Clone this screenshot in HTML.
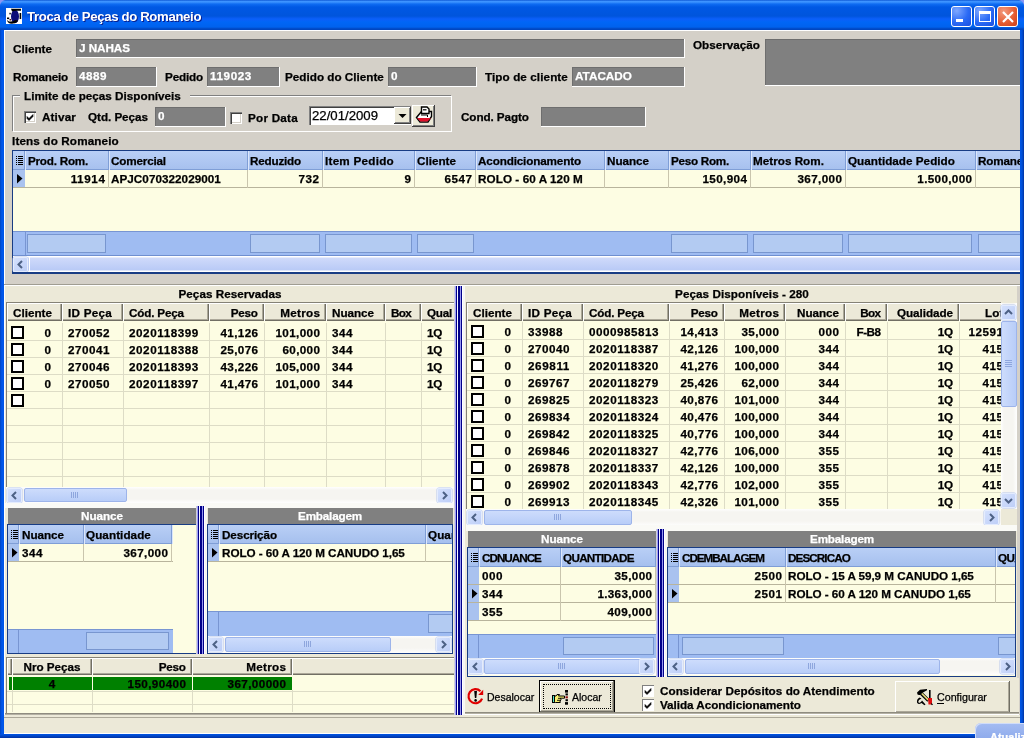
<!DOCTYPE html><html><head><meta charset="utf-8"><style>
html,body{margin:0;padding:0;width:1024px;height:738px;overflow:hidden;background:#d4d0c8}
body{position:relative;font-family:"Liberation Sans", sans-serif}
div{position:absolute;box-sizing:border-box}
.t{white-space:pre;-webkit-text-stroke:0.25px currentColor}
</style></head><body>
<div style="left:0;top:0;width:1024px;height:738px;overflow:hidden;will-change:transform">
<div style="left:0px;top:0px;width:1024px;height:738px;background:#d4d0c8"></div>
<div style="left:0px;top:0px;width:1024px;height:30px;background:linear-gradient(#0046c8 0px,#3d93ff 1px,#3d93ff 2px,#0f6cf2 4px,#0058e4 7px,#0055dc 16px,#0b5ffa 19px,#0066f6 22px,#0062ee 27px,#0046c0 29px,#0046c0 30px)"></div>
<div style="left:0px;top:30px;width:4px;height:708px;background:linear-gradient(90deg,#0044c0,#0058ee 2px,#0055e5)"></div>
<div style="left:1020px;top:30px;width:4px;height:708px;background:linear-gradient(90deg,#0055e5,#0050d8 2px,#0032a0)"></div>
<div style="left:0px;top:734px;width:1024px;height:4px;background:linear-gradient(#0055e5,#0046c8 2px,#0030a0)"></div>
<div style="left:4px;top:30px;width:1016px;height:1px;background:#fff"></div>
<div style="left:4px;top:30px;width:1px;height:704px;background:#fff"></div>
<svg style="position:absolute;left:6px;top:8px" width="16" height="16" viewBox="0 0 16 16">
<rect width="16" height="16" fill="#fff"/>
<ellipse cx="9" cy="8.5" rx="4" ry="6.8" fill="#0c0c78"/>
<path d="M5 0.8 H15 V2.8 H11 Q9 2.5 6 3.5 Z" fill="#000"/>
<rect x="13.6" y="5" width="1.6" height="6" fill="#000"/>
<path d="M1 12 Q1.5 16 7 15.6 Q11 15 12 12.5 L9 12 Q7 14 3 13.5 Z" fill="#000"/>
<rect x="3.3" y="4.8" width="1.6" height="1.6" fill="#222"/>
<rect x="1" y="9.5" width="2.2" height="1.6" fill="#000"/>
<rect x="3.5" y="11" width="1.6" height="1.5" fill="#511"/>
</svg>
<div class="t" style="left:27px;top:9.43px;font-size:13.2px;line-height:16px;font-weight:bold;color:#fff;letter-spacing:-0.35px;-webkit-text-stroke:0;text-shadow:1px 1px #0a1e8a">Troca de Peças do Romaneio</div>
<div style="left:951px;top:6px;width:21px;height:21px;border:1px solid #fff;border-radius:3px;background:radial-gradient(circle at 25% 20%,#7fa8ff,#2a6af5 55%,#1a4fe0)"></div>
<div style="left:974px;top:6px;width:21px;height:21px;border:1px solid #fff;border-radius:3px;background:radial-gradient(circle at 25% 20%,#7fa8ff,#2a6af5 55%,#1a4fe0)"></div>
<div style="left:997px;top:6px;width:21px;height:21px;border:1px solid #fff;border-radius:3px;background:radial-gradient(circle at 30% 25%,#f39b7f,#e45a2f 60%,#c8401a)"></div>
<div style="left:956px;top:19px;width:7px;height:3px;background:#fff"></div>
<div style="left:979px;top:11px;width:12px;height:11px;border:1px solid #fff;border-top:3px solid #fff"></div>
<svg style="position:absolute;left:997px;top:6px" width="21" height="21" viewBox="0 0 21 21"><path d="M6 6 L16 16 M16 6 L6 16" stroke="#fff" stroke-width="2.2"/></svg>
<div class="t" style="left:13px;top:41.95px;font-size:11.7px;line-height:14px;font-weight:bold;color:#000;letter-spacing:-0.001px;">Cliente</div>
<div style="left:76px;top:39px;width:609px;height:19px;background:#808080;box-shadow:inset -1px -1px #fff, inset 1px 1px #6e6e6e;"></div>
<div class="t" style="left:79px;top:40.95px;font-size:11.7px;line-height:14px;font-weight:bold;color:#fff;letter-spacing:-0.051px;">J NAHAS</div>
<div class="t" style="left:693px;top:37.95px;font-size:11.7px;line-height:14px;font-weight:bold;color:#000;letter-spacing:0.001px;">Observação</div>
<div style="left:765px;top:39px;width:258px;height:47px;background:#808080;box-shadow:inset -1px -1px #fff, inset 1px 1px #6e6e6e;"></div>
<div class="t" style="left:13px;top:69.95px;font-size:11.7px;line-height:14px;font-weight:bold;color:#000;letter-spacing:-0.195px;">Romaneio</div>
<div style="left:76px;top:67px;width:81px;height:20px;background:#808080;box-shadow:inset -1px -1px #fff, inset 1px 1px #6e6e6e;"></div>
<div class="t" style="left:79px;top:68.95px;font-size:11.7px;line-height:14px;font-weight:bold;color:#fff;letter-spacing:0.493px;">4889</div>
<div class="t" style="left:165px;top:69.95px;font-size:11.7px;line-height:14px;font-weight:bold;color:#000;letter-spacing:-0.167px;">Pedido</div>
<div style="left:207px;top:67px;width:73px;height:20px;background:#808080;box-shadow:inset -1px -1px #fff, inset 1px 1px #6e6e6e;"></div>
<div class="t" style="left:210px;top:68.95px;font-size:11.7px;line-height:14px;font-weight:bold;color:#fff;letter-spacing:0.600px;">119023</div>
<div class="t" style="left:285px;top:69.95px;font-size:11.7px;line-height:14px;font-weight:bold;color:#000;letter-spacing:0.011px;">Pedido do Cliente</div>
<div style="left:388px;top:67px;width:89px;height:20px;background:#808080;box-shadow:inset -1px -1px #fff, inset 1px 1px #6e6e6e;"></div>
<div class="t" style="left:391px;top:68.95px;font-size:11.7px;line-height:14px;font-weight:bold;color:#fff;letter-spacing:0.493px;">0</div>
<div class="t" style="left:485px;top:69.95px;font-size:11.7px;line-height:14px;font-weight:bold;color:#000;letter-spacing:0.087px;">Tipo de cliente</div>
<div style="left:572px;top:67px;width:113px;height:20px;background:#808080;box-shadow:inset -1px -1px #fff, inset 1px 1px #6e6e6e;"></div>
<div class="t" style="left:575px;top:68.95px;font-size:11.7px;line-height:14px;font-weight:bold;color:#fff;letter-spacing:0.034px;">ATACADO</div>
<div style="left:12px;top:95px;width:439px;height:36px;box-shadow:inset 1px 1px #808080, inset 2px 2px #fff, 1px 1px #fff;"></div>
<div style="left:20px;top:88px;width:170px;height:12px;background:#d4d0c8"></div>
<div class="t" style="left:24px;top:88.95px;font-size:11.7px;line-height:14px;font-weight:bold;color:#000;letter-spacing:0.011px;">Limite de peças Disponíveis</div>
<div style="left:24px;top:111px;width:12px;height:12px;background:#fff;box-shadow:inset 1px 1px #808080, inset 2px 2px #404040, inset -1px -1px #fff, inset -2px -2px #d4d0c8;"></div>
<svg style="position:absolute;left:24px;top:111px" width="12" height="12" viewBox="0 0 12 12"><path d="M3 5.5 L5 7.5 L9 3.5 L9 5.5 L5 9.5 L3 7.5Z" fill="#000" stroke="#000" stroke-width="0.6"/></svg>
<div class="t" style="left:42px;top:110.45px;font-size:11.7px;line-height:14px;font-weight:bold;color:#000;letter-spacing:0.139px;">Ativar</div>
<div class="t" style="left:88px;top:110.45px;font-size:11.7px;line-height:14px;font-weight:bold;color:#000;letter-spacing:-0.048px;">Qtd. Peças</div>
<div style="left:155px;top:107px;width:71px;height:20px;background:#808080;box-shadow:inset -1px -1px #fff, inset 1px 1px #6e6e6e;"></div>
<div class="t" style="left:158px;top:108.95px;font-size:11.7px;line-height:14px;font-weight:bold;color:#fff;letter-spacing:0.493px;">0</div>
<div style="left:230px;top:112px;width:12px;height:12px;background:#fff;box-shadow:inset 1px 1px #808080, inset 2px 2px #404040, inset -1px -1px #fff, inset -2px -2px #d4d0c8;"></div>
<div class="t" style="left:248px;top:110.95px;font-size:11.7px;line-height:14px;font-weight:bold;color:#000;letter-spacing:0.236px;">Por Data</div>
<div style="left:309px;top:106px;width:102px;height:19px;background:#fff;box-shadow:inset 1px 1px #808080, inset 2px 2px #404040, inset -1px -1px #fff;"></div>
<div class="t" style="left:312px;top:108.43px;font-size:13.2px;line-height:16px;font-weight:normal;color:#000;">22/01/2009</div>
<div style="left:394px;top:107px;width:17px;height:17px;background:#ece9d8;box-shadow:inset -1px -1px #404040, inset 1px 1px #fff, inset -2px -2px #808080;"></div>
<svg style="position:absolute;left:394px;top:107px" width="17" height="17"><path d="M4.5 7 L12.5 7 L8.5 11Z" fill="#000"/></svg>
<div style="left:412px;top:105px;width:23px;height:22px;background:#ece9d8;box-shadow:inset -1px -1px #404040, inset 1px 1px #fff, inset -2px -2px #808080;"></div>
<svg style="position:absolute;left:412px;top:105px" width="23" height="22" viewBox="0 0 23 22">
<path d="M4.5 12.5 L9.5 6.5 H19.5 V11.5 L16 17 H8 Z" fill="#fff" stroke="#000" stroke-width="1.4"/>
<path d="M5 13 H19 L15.5 16.5 H8.3 Z" fill="#e0102a"/>
<path d="M9.5 2 H15 L17 4 V8.5 H9.5 Z" fill="#fff" stroke="#000" stroke-width="1.4"/>
<path d="M11 4.8 H14.5" stroke="#000" stroke-width="1.2"/>
<path d="M9 10 H15.5 V12" stroke="#000" stroke-width="1" fill="none"/>
</svg>
<div class="t" style="left:461px;top:109.95px;font-size:11.7px;line-height:14px;font-weight:bold;color:#000;letter-spacing:-0.081px;">Cond. Pagto</div>
<div style="left:541px;top:107px;width:105px;height:20px;background:#808080;box-shadow:inset -1px -1px #fff, inset 1px 1px #6e6e6e;"></div>
<div class="t" style="left:12px;top:133.95px;font-size:11.7px;line-height:14px;font-weight:bold;color:#000;letter-spacing:0.138px;">Itens do Romaneio</div>
<div style="left:12px;top:150px;width:1012px;height:124px;background:#fdfde3;border:1px solid #183c84;border-right:none;box-sizing:border-box"></div>
<div style="left:13px;top:151px;width:1011px;height:19px;background:linear-gradient(#b9cff6,#a6c0ee)"></div>
<div style="left:13px;top:169px;width:1011px;height:1px;background:#7f9ed6"></div>
<div style="left:24px;top:151px;width:1px;height:19px;background:#7f9ed6"></div>
<div style="left:25px;top:151px;width:1px;height:19px;background:#dbe6fb"></div>
<div class="t" style="left:28px;top:153.95px;font-size:11.7px;line-height:14px;font-weight:bold;color:#000;letter-spacing:-0.240px;">Prod. Rom.</div>
<div style="left:108px;top:151px;width:1px;height:19px;background:#7f9ed6"></div>
<div style="left:109px;top:151px;width:1px;height:19px;background:#dbe6fb"></div>
<div class="t" style="left:111px;top:153.95px;font-size:11.7px;line-height:14px;font-weight:bold;color:#000;letter-spacing:-0.175px;">Comercial</div>
<div style="left:247px;top:151px;width:1px;height:19px;background:#7f9ed6"></div>
<div style="left:248px;top:151px;width:1px;height:19px;background:#dbe6fb"></div>
<div class="t" style="left:250px;top:153.95px;font-size:11.7px;line-height:14px;font-weight:bold;color:#000;letter-spacing:-0.206px;">Reduzido</div>
<div style="left:322px;top:151px;width:1px;height:19px;background:#7f9ed6"></div>
<div style="left:323px;top:151px;width:1px;height:19px;background:#dbe6fb"></div>
<div class="t" style="left:325px;top:153.95px;font-size:11.7px;line-height:14px;font-weight:bold;color:#000;letter-spacing:0.244px;">Item Pedido</div>
<div style="left:414px;top:151px;width:1px;height:19px;background:#7f9ed6"></div>
<div style="left:415px;top:151px;width:1px;height:19px;background:#dbe6fb"></div>
<div class="t" style="left:417px;top:153.95px;font-size:11.7px;line-height:14px;font-weight:bold;color:#000;letter-spacing:-0.001px;">Cliente</div>
<div style="left:475px;top:151px;width:1px;height:19px;background:#7f9ed6"></div>
<div style="left:476px;top:151px;width:1px;height:19px;background:#dbe6fb"></div>
<div class="t" style="left:478px;top:153.95px;font-size:11.7px;line-height:14px;font-weight:bold;color:#000;letter-spacing:-0.144px;">Acondicionamento</div>
<div style="left:604px;top:151px;width:1px;height:19px;background:#7f9ed6"></div>
<div style="left:605px;top:151px;width:1px;height:19px;background:#dbe6fb"></div>
<div class="t" style="left:607px;top:153.95px;font-size:11.7px;line-height:14px;font-weight:bold;color:#000;letter-spacing:-0.044px;">Nuance</div>
<div style="left:668px;top:151px;width:1px;height:19px;background:#7f9ed6"></div>
<div style="left:669px;top:151px;width:1px;height:19px;background:#dbe6fb"></div>
<div class="t" style="left:671px;top:153.95px;font-size:11.7px;line-height:14px;font-weight:bold;color:#000;letter-spacing:-0.274px;">Peso Rom.</div>
<div style="left:750px;top:151px;width:1px;height:19px;background:#7f9ed6"></div>
<div style="left:751px;top:151px;width:1px;height:19px;background:#dbe6fb"></div>
<div class="t" style="left:753px;top:153.95px;font-size:11.7px;line-height:14px;font-weight:bold;color:#000;letter-spacing:0.013px;">Metros Rom.</div>
<div style="left:845px;top:151px;width:1px;height:19px;background:#7f9ed6"></div>
<div style="left:846px;top:151px;width:1px;height:19px;background:#dbe6fb"></div>
<div class="t" style="left:848px;top:153.95px;font-size:11.7px;line-height:14px;font-weight:bold;color:#000;letter-spacing:0.023px;">Quantidade Pedido</div>
<div style="left:975px;top:151px;width:1px;height:19px;background:#7f9ed6"></div>
<div style="left:976px;top:151px;width:1px;height:19px;background:#dbe6fb"></div>
<div class="t" style="left:978px;top:153.95px;font-size:11.7px;line-height:14px;font-weight:bold;color:#000;letter-spacing:-0.195px;">Romaneio</div>
<div style="left:1100px;top:151px;width:1px;height:19px;background:#7f9ed6"></div>
<div style="left:1101px;top:151px;width:1px;height:19px;background:#dbe6fb"></div>
<div style="left:16px;top:156px;width:1px;height:1px;background:#000"></div>
<div style="left:18px;top:156px;width:5px;height:1px;background:#000"></div>
<div style="left:16px;top:158px;width:1px;height:1px;background:#000"></div>
<div style="left:18px;top:158px;width:5px;height:1px;background:#000"></div>
<div style="left:16px;top:160px;width:1px;height:1px;background:#000"></div>
<div style="left:18px;top:160px;width:5px;height:1px;background:#000"></div>
<div style="left:16px;top:162px;width:1px;height:1px;background:#000"></div>
<div style="left:18px;top:162px;width:5px;height:1px;background:#000"></div>
<div style="left:16px;top:164px;width:1px;height:1px;background:#000"></div>
<div style="left:18px;top:164px;width:5px;height:1px;background:#000"></div>
<div style="left:13px;top:170px;width:12px;height:18px;background:#a9c2ef"></div>
<div style="left:13px;top:187px;width:1011px;height:1px;background:#b8b49c"></div>
<svg style="position:absolute;left:17px;top:174px" width="7" height="10"><path d="M0 0 L5.5 4.5 L0 9.5Z" fill="#000"/></svg>
<div style="left:108px;top:170px;width:1px;height:18px;background:#c9c5ad"></div>
<div style="left:247px;top:170px;width:1px;height:18px;background:#c9c5ad"></div>
<div style="left:322px;top:170px;width:1px;height:18px;background:#c9c5ad"></div>
<div style="left:414px;top:170px;width:1px;height:18px;background:#c9c5ad"></div>
<div style="left:475px;top:170px;width:1px;height:18px;background:#c9c5ad"></div>
<div style="left:604px;top:170px;width:1px;height:18px;background:#c9c5ad"></div>
<div style="left:668px;top:170px;width:1px;height:18px;background:#c9c5ad"></div>
<div style="left:750px;top:170px;width:1px;height:18px;background:#c9c5ad"></div>
<div style="left:845px;top:170px;width:1px;height:18px;background:#c9c5ad"></div>
<div style="left:975px;top:170px;width:1px;height:18px;background:#c9c5ad"></div>
<div style="left:1100px;top:170px;width:1px;height:18px;background:#c9c5ad"></div>
<div class="t" style="left:-295px;width:400px;text-align:right;margin-left:0.622px;top:171.95px;font-size:11.7px;line-height:14px;font-weight:bold;color:#000;letter-spacing:0.622px;">11914</div>
<div class="t" style="left:111px;top:171.95px;font-size:11.7px;line-height:14px;font-weight:bold;color:#000;letter-spacing:0.044px;">APJC070322029001</div>
<div class="t" style="left:-81px;width:400px;text-align:right;margin-left:0.493px;top:171.95px;font-size:11.7px;line-height:14px;font-weight:bold;color:#000;letter-spacing:0.493px;">732</div>
<div class="t" style="left:11px;width:400px;text-align:right;margin-left:0.493px;top:171.95px;font-size:11.7px;line-height:14px;font-weight:bold;color:#000;letter-spacing:0.493px;">9</div>
<div class="t" style="left:72px;width:400px;text-align:right;margin-left:0.493px;top:171.95px;font-size:11.7px;line-height:14px;font-weight:bold;color:#000;letter-spacing:0.493px;">6547</div>
<div class="t" style="left:478px;top:171.95px;font-size:11.7px;line-height:14px;font-weight:bold;color:#000;letter-spacing:0.070px;">ROLO - 60 A 120 M</div>
<div class="t" style="left:347px;width:400px;text-align:right;margin-left:0.387px;top:171.95px;font-size:11.7px;line-height:14px;font-weight:bold;color:#000;letter-spacing:0.387px;">150,904</div>
<div class="t" style="left:442px;width:400px;text-align:right;margin-left:0.387px;top:171.95px;font-size:11.7px;line-height:14px;font-weight:bold;color:#000;letter-spacing:0.387px;">367,000</div>
<div class="t" style="left:572px;width:400px;text-align:right;margin-left:0.328px;top:171.95px;font-size:11.7px;line-height:14px;font-weight:bold;color:#000;letter-spacing:0.328px;">1.500,000</div>
<div style="left:13px;top:231px;width:1011px;height:25px;background:#9fbcf2"></div>
<div style="left:13px;top:231px;width:1011px;height:1px;background:#7895d2"></div>
<div style="left:25px;top:232px;width:1px;height:24px;background:#7895d2"></div>
<div style="left:27px;top:234px;width:79px;height:19px;background:#b3cbf2;border:1px solid #7896cf;box-sizing:border-box"></div>
<div style="left:250px;top:234px;width:70px;height:19px;background:#b3cbf2;border:1px solid #7896cf;box-sizing:border-box"></div>
<div style="left:325px;top:234px;width:87px;height:19px;background:#b3cbf2;border:1px solid #7896cf;box-sizing:border-box"></div>
<div style="left:417px;top:234px;width:57px;height:19px;background:#b3cbf2;border:1px solid #7896cf;box-sizing:border-box"></div>
<div style="left:671px;top:234px;width:77px;height:19px;background:#b3cbf2;border:1px solid #7896cf;box-sizing:border-box"></div>
<div style="left:753px;top:234px;width:90px;height:19px;background:#b3cbf2;border:1px solid #7896cf;box-sizing:border-box"></div>
<div style="left:848px;top:234px;width:124px;height:19px;background:#b3cbf2;border:1px solid #7896cf;box-sizing:border-box"></div>
<div style="left:978px;top:234px;width:82px;height:19px;background:#b3cbf2;border:1px solid #7896cf;box-sizing:border-box"></div>
<div style="left:13px;top:255px;width:1011px;height:1px;background:#6f8fd0"></div>
<div style="left:13px;top:256px;width:1011px;height:16px;background:linear-gradient(#fff 0px,#fff 1px,#cfdafa 2px,#b9caf6 14px,#fff 15px)"></div>
<div style="left:13px;top:257px;width:15px;height:15px;background:linear-gradient(135deg,#d6e2fd,#bccdf7);border-radius:2px;box-shadow:inset 0 0 0 1px #e4ecfe, 0 0 0 0.5px #b8c8ec"></div>
<svg style="position:absolute;left:13px;top:257px" width="15" height="15"><path d="M9 4 L5.5 7.5 L9 11" stroke="#4d6185" stroke-width="2" fill="none"/></svg>
<div style="left:29px;top:257px;width:1px;height:14px;background:#fff"></div>
<div style="left:12px;top:272px;width:1012px;height:2px;background:#183c84"></div>
<div style="left:4px;top:284px;width:1016px;height:1px;background:#a09d92"></div>
<div style="left:4px;top:285px;width:1016px;height:1px;background:#fff"></div>
<div style="left:5px;top:286px;width:450px;height:431px;background:#ece9d8"></div>
<div style="left:465px;top:286px;width:554px;height:431px;background:#ece9d8"></div>
<div style="left:5px;top:286px;width:450px;height:16px;background:#ece9d8"></div>
<div class="t" style="left:-70px;width:600px;text-align:center;top:286.95px;font-size:11.7px;line-height:14px;font-weight:bold;color:#000;letter-spacing:0.014px;">Peças Reservadas</div>
<div style="left:6px;top:302px;width:448px;height:185px;overflow:hidden;background:#fdfde3">
<div style="left:0px;top:0px;width:448px;height:1px;background:#858276"></div>
<div style="left:0px;top:0px;width:1px;height:185px;background:#858276"></div>
<div style="left:1px;top:1px;width:55px;height:18px;background:#ece9d8;box-shadow:inset 1px 1px #fff, inset -1px -1px #716f64, inset -2px -2px #aca899;"></div>
<div style="left:56px;top:1px;width:61px;height:18px;background:#ece9d8;box-shadow:inset 1px 1px #fff, inset -1px -1px #716f64, inset -2px -2px #aca899;"></div>
<div style="left:117px;top:1px;width:86px;height:18px;background:#ece9d8;box-shadow:inset 1px 1px #fff, inset -1px -1px #716f64, inset -2px -2px #aca899;"></div>
<div style="left:203px;top:1px;width:55px;height:18px;background:#ece9d8;box-shadow:inset 1px 1px #fff, inset -1px -1px #716f64, inset -2px -2px #aca899;"></div>
<div style="left:258px;top:1px;width:62px;height:18px;background:#ece9d8;box-shadow:inset 1px 1px #fff, inset -1px -1px #716f64, inset -2px -2px #aca899;"></div>
<div style="left:320px;top:1px;width:59px;height:18px;background:#ece9d8;box-shadow:inset 1px 1px #fff, inset -1px -1px #716f64, inset -2px -2px #aca899;"></div>
<div style="left:379px;top:1px;width:36px;height:18px;background:#ece9d8;box-shadow:inset 1px 1px #fff, inset -1px -1px #716f64, inset -2px -2px #aca899;"></div>
<div style="left:415px;top:1px;width:59px;height:18px;background:#ece9d8;box-shadow:inset 1px 1px #fff, inset -1px -1px #716f64, inset -2px -2px #aca899;"></div>
<div class="t" style="left:7px;top:3.95px;font-size:11.7px;line-height:14px;font-weight:bold;color:#000;letter-spacing:-0.001px;">Cliente</div>
<div class="t" style="left:62px;top:3.95px;font-size:11.7px;line-height:14px;font-weight:bold;color:#000;letter-spacing:0.246px;">ID Peça</div>
<div class="t" style="left:123px;top:3.95px;font-size:11.7px;line-height:14px;font-weight:bold;color:#000;letter-spacing:-0.174px;">Cód. Peça</div>
<div class="t" style="left:-48.241px;width:300px;text-align:right;top:3.95px;font-size:11.7px;line-height:14px;font-weight:bold;color:#000;letter-spacing:-0.241px;">Peso</div>
<div class="t" style="left:14.274000000000001px;width:300px;text-align:right;top:3.95px;font-size:11.7px;line-height:14px;font-weight:bold;color:#000;letter-spacing:0.274px;">Metros</div>
<div class="t" style="left:326px;top:3.95px;font-size:11.7px;line-height:14px;font-weight:bold;color:#000;letter-spacing:-0.044px;">Nuance</div>
<div class="t" style="left:385px;top:3.95px;font-size:11.7px;line-height:14px;font-weight:bold;color:#000;letter-spacing:-0.701px;">Box</div>
<div class="t" style="left:421px;top:3.95px;font-size:11.7px;line-height:14px;font-weight:bold;color:#000;letter-spacing:-0.251px;">Qual</div>
<div style="left:1px;top:38px;width:448px;height:1px;background:#dddcc6"></div>
<div style="left:1px;top:55px;width:448px;height:1px;background:#dddcc6"></div>
<div style="left:1px;top:72px;width:448px;height:1px;background:#dddcc6"></div>
<div style="left:1px;top:89px;width:448px;height:1px;background:#dddcc6"></div>
<div style="left:1px;top:106px;width:448px;height:1px;background:#dddcc6"></div>
<div style="left:1px;top:123px;width:448px;height:1px;background:#dddcc6"></div>
<div style="left:1px;top:140px;width:448px;height:1px;background:#dddcc6"></div>
<div style="left:1px;top:157px;width:448px;height:1px;background:#dddcc6"></div>
<div style="left:1px;top:174px;width:448px;height:1px;background:#dddcc6"></div>
<div style="left:1px;top:191px;width:448px;height:1px;background:#dddcc6"></div>
<div style="left:56px;top:21px;width:1px;height:164px;background:#dddcc6"></div>
<div style="left:117px;top:21px;width:1px;height:164px;background:#dddcc6"></div>
<div style="left:203px;top:21px;width:1px;height:164px;background:#dddcc6"></div>
<div style="left:258px;top:21px;width:1px;height:164px;background:#dddcc6"></div>
<div style="left:320px;top:21px;width:1px;height:164px;background:#dddcc6"></div>
<div style="left:379px;top:21px;width:1px;height:164px;background:#dddcc6"></div>
<div style="left:415px;top:21px;width:1px;height:164px;background:#dddcc6"></div>
<div style="left:474px;top:21px;width:1px;height:164px;background:#dddcc6"></div>
<div style="left:5px;top:24px;width:13px;height:13px;border:2px solid #000;background:#fff"></div>
<div class="t" style="left:-254.507px;width:300px;text-align:right;top:23.95px;font-size:11.7px;line-height:14px;font-weight:bold;color:#000;letter-spacing:0.493px;">0</div>
<div class="t" style="left:62px;top:23.95px;font-size:11.7px;line-height:14px;font-weight:bold;color:#000;letter-spacing:0.493px;">270052</div>
<div class="t" style="left:123px;top:23.95px;font-size:11.7px;line-height:14px;font-weight:bold;color:#000;letter-spacing:0.557px;">2020118399</div>
<div class="t" style="left:-47.631px;width:300px;text-align:right;top:23.95px;font-size:11.7px;line-height:14px;font-weight:bold;color:#000;letter-spacing:0.369px;">41,126</div>
<div class="t" style="left:14.387px;width:300px;text-align:right;top:23.95px;font-size:11.7px;line-height:14px;font-weight:bold;color:#000;letter-spacing:0.387px;">101,000</div>
<div class="t" style="left:326px;top:23.95px;font-size:11.7px;line-height:14px;font-weight:bold;color:#000;letter-spacing:0.493px;">344</div>
<div class="t" style="left:421px;top:23.95px;font-size:11.7px;line-height:14px;font-weight:bold;color:#000;letter-spacing:-0.304px;">1Q</div>
<div style="left:5px;top:41px;width:13px;height:13px;border:2px solid #000;background:#fff"></div>
<div class="t" style="left:-254.507px;width:300px;text-align:right;top:40.95px;font-size:11.7px;line-height:14px;font-weight:bold;color:#000;letter-spacing:0.493px;">0</div>
<div class="t" style="left:62px;top:40.95px;font-size:11.7px;line-height:14px;font-weight:bold;color:#000;letter-spacing:0.493px;">270041</div>
<div class="t" style="left:123px;top:40.95px;font-size:11.7px;line-height:14px;font-weight:bold;color:#000;letter-spacing:0.557px;">2020118388</div>
<div class="t" style="left:-47.631px;width:300px;text-align:right;top:40.95px;font-size:11.7px;line-height:14px;font-weight:bold;color:#000;letter-spacing:0.369px;">25,076</div>
<div class="t" style="left:14.369px;width:300px;text-align:right;top:40.95px;font-size:11.7px;line-height:14px;font-weight:bold;color:#000;letter-spacing:0.369px;">60,000</div>
<div class="t" style="left:326px;top:40.95px;font-size:11.7px;line-height:14px;font-weight:bold;color:#000;letter-spacing:0.493px;">344</div>
<div class="t" style="left:421px;top:40.95px;font-size:11.7px;line-height:14px;font-weight:bold;color:#000;letter-spacing:-0.304px;">1Q</div>
<div style="left:5px;top:58px;width:13px;height:13px;border:2px solid #000;background:#fff"></div>
<div class="t" style="left:-254.507px;width:300px;text-align:right;top:57.95px;font-size:11.7px;line-height:14px;font-weight:bold;color:#000;letter-spacing:0.493px;">0</div>
<div class="t" style="left:62px;top:57.95px;font-size:11.7px;line-height:14px;font-weight:bold;color:#000;letter-spacing:0.493px;">270046</div>
<div class="t" style="left:123px;top:57.95px;font-size:11.7px;line-height:14px;font-weight:bold;color:#000;letter-spacing:0.557px;">2020118393</div>
<div class="t" style="left:-47.631px;width:300px;text-align:right;top:57.95px;font-size:11.7px;line-height:14px;font-weight:bold;color:#000;letter-spacing:0.369px;">43,226</div>
<div class="t" style="left:14.387px;width:300px;text-align:right;top:57.95px;font-size:11.7px;line-height:14px;font-weight:bold;color:#000;letter-spacing:0.387px;">105,000</div>
<div class="t" style="left:326px;top:57.95px;font-size:11.7px;line-height:14px;font-weight:bold;color:#000;letter-spacing:0.493px;">344</div>
<div class="t" style="left:421px;top:57.95px;font-size:11.7px;line-height:14px;font-weight:bold;color:#000;letter-spacing:-0.304px;">1Q</div>
<div style="left:5px;top:75px;width:13px;height:13px;border:2px solid #000;background:#fff"></div>
<div class="t" style="left:-254.507px;width:300px;text-align:right;top:74.95px;font-size:11.7px;line-height:14px;font-weight:bold;color:#000;letter-spacing:0.493px;">0</div>
<div class="t" style="left:62px;top:74.95px;font-size:11.7px;line-height:14px;font-weight:bold;color:#000;letter-spacing:0.493px;">270050</div>
<div class="t" style="left:123px;top:74.95px;font-size:11.7px;line-height:14px;font-weight:bold;color:#000;letter-spacing:0.557px;">2020118397</div>
<div class="t" style="left:-47.631px;width:300px;text-align:right;top:74.95px;font-size:11.7px;line-height:14px;font-weight:bold;color:#000;letter-spacing:0.369px;">41,476</div>
<div class="t" style="left:14.387px;width:300px;text-align:right;top:74.95px;font-size:11.7px;line-height:14px;font-weight:bold;color:#000;letter-spacing:0.387px;">101,000</div>
<div class="t" style="left:326px;top:74.95px;font-size:11.7px;line-height:14px;font-weight:bold;color:#000;letter-spacing:0.493px;">344</div>
<div class="t" style="left:421px;top:74.95px;font-size:11.7px;line-height:14px;font-weight:bold;color:#000;letter-spacing:-0.304px;">1Q</div>
<div style="left:5px;top:92px;width:13px;height:13px;border:2px solid #000;background:#fff"></div>
</div>
<div style="left:6px;top:487px;width:448px;height:16px;background:linear-gradient(#fefefe,#f6f5f1 3px,#f6f5f1 12px,#fefefe)"></div>
<div style="left:7px;top:488px;width:15px;height:15px;background:linear-gradient(135deg,#d6e2fd,#bccdf7);border-radius:2px;box-shadow:inset 0 0 0 1px #e4ecfe, 0 0 0 0.5px #b8c8ec"></div>
<svg style="position:absolute;left:7px;top:488px" width="15" height="15"><path d="M9 4 L5.5 7.5 L9 11" stroke="#4d6185" stroke-width="2" fill="none"/></svg>
<div style="left:24px;top:488px;width:103px;height:14px;background:linear-gradient(#cddcfc,#b8cdf8);border:1px solid #9db4ea;border-radius:2px;box-sizing:border-box"></div>
<div style="left:71px;top:492px;width:1px;height:6px;background:#8ea6dd"></div>
<div style="left:73px;top:492px;width:1px;height:6px;background:#8ea6dd"></div>
<div style="left:75px;top:492px;width:1px;height:6px;background:#8ea6dd"></div>
<div style="left:77px;top:492px;width:1px;height:6px;background:#8ea6dd"></div>
<div style="left:437px;top:488px;width:15px;height:15px;background:linear-gradient(135deg,#d6e2fd,#bccdf7);border-radius:2px;box-shadow:inset 0 0 0 1px #e4ecfe, 0 0 0 0.5px #b8c8ec"></div>
<svg style="position:absolute;left:437px;top:488px" width="15" height="15"><path d="M6 4 L9.5 7.5 L6 11" stroke="#4d6185" stroke-width="2" fill="none"/></svg>
<div style="left:454px;top:286px;width:1px;height:429px;background:#d0d0d8"></div>
<div style="left:455px;top:286px;width:1px;height:429px;background:#a0a0f8"></div>
<div style="left:456px;top:286px;width:1px;height:429px;background:#000088"></div>
<div style="left:457px;top:286px;width:1px;height:429px;background:#f8f8ff"></div>
<div style="left:458px;top:286px;width:1px;height:429px;background:#000088"></div>
<div style="left:459px;top:286px;width:1px;height:429px;background:#000088"></div>
<div style="left:460px;top:286px;width:1px;height:429px;background:#9898f0"></div>
<div style="left:461px;top:286px;width:1px;height:429px;background:#000088"></div>
<div style="left:462px;top:286px;width:1px;height:429px;background:#ffffff"></div>
<div style="left:463px;top:286px;width:1px;height:429px;background:#f4f4f4"></div>
<div style="left:464px;top:286px;width:1px;height:429px;background:#f8f8f4"></div>
<div style="left:465px;top:286px;width:554px;height:16px;background:#ece9d8"></div>
<div class="t" style="left:442px;width:600px;text-align:center;top:286.95px;font-size:11.7px;line-height:14px;font-weight:bold;color:#000;letter-spacing:0.058px;">Peças Disponíveis - 280</div>
<div style="left:466px;top:302px;width:535px;height:208px;overflow:hidden;background:#fdfde3">
<div style="left:0px;top:0px;width:535px;height:1px;background:#858276"></div>
<div style="left:0px;top:0px;width:1px;height:208px;background:#858276"></div>
<div style="left:1px;top:1px;width:55px;height:18px;background:#ece9d8;box-shadow:inset 1px 1px #fff, inset -1px -1px #716f64, inset -2px -2px #aca899;"></div>
<div style="left:56px;top:1px;width:61px;height:18px;background:#ece9d8;box-shadow:inset 1px 1px #fff, inset -1px -1px #716f64, inset -2px -2px #aca899;"></div>
<div style="left:117px;top:1px;width:86px;height:18px;background:#ece9d8;box-shadow:inset 1px 1px #fff, inset -1px -1px #716f64, inset -2px -2px #aca899;"></div>
<div style="left:203px;top:1px;width:55px;height:18px;background:#ece9d8;box-shadow:inset 1px 1px #fff, inset -1px -1px #716f64, inset -2px -2px #aca899;"></div>
<div style="left:258px;top:1px;width:61px;height:18px;background:#ece9d8;box-shadow:inset 1px 1px #fff, inset -1px -1px #716f64, inset -2px -2px #aca899;"></div>
<div style="left:319px;top:1px;width:60px;height:18px;background:#ece9d8;box-shadow:inset 1px 1px #fff, inset -1px -1px #716f64, inset -2px -2px #aca899;"></div>
<div style="left:379px;top:1px;width:42px;height:18px;background:#ece9d8;box-shadow:inset 1px 1px #fff, inset -1px -1px #716f64, inset -2px -2px #aca899;"></div>
<div style="left:421px;top:1px;width:72px;height:18px;background:#ece9d8;box-shadow:inset 1px 1px #fff, inset -1px -1px #716f64, inset -2px -2px #aca899;"></div>
<div style="left:493px;top:1px;width:50px;height:18px;background:#ece9d8;box-shadow:inset 1px 1px #fff, inset -1px -1px #716f64, inset -2px -2px #aca899;"></div>
<div class="t" style="left:7px;top:3.95px;font-size:11.7px;line-height:14px;font-weight:bold;color:#000;letter-spacing:-0.001px;">Cliente</div>
<div class="t" style="left:62px;top:3.95px;font-size:11.7px;line-height:14px;font-weight:bold;color:#000;letter-spacing:0.246px;">ID Peça</div>
<div class="t" style="left:123px;top:3.95px;font-size:11.7px;line-height:14px;font-weight:bold;color:#000;letter-spacing:-0.174px;">Cód. Peça</div>
<div class="t" style="left:-48.241px;width:300px;text-align:right;top:3.95px;font-size:11.7px;line-height:14px;font-weight:bold;color:#000;letter-spacing:-0.241px;">Peso</div>
<div class="t" style="left:13.274000000000001px;width:300px;text-align:right;top:3.95px;font-size:11.7px;line-height:14px;font-weight:bold;color:#000;letter-spacing:0.274px;">Metros</div>
<div class="t" style="left:72.956px;width:300px;text-align:right;top:3.95px;font-size:11.7px;line-height:14px;font-weight:bold;color:#000;letter-spacing:-0.044px;">Nuance</div>
<div class="t" style="left:114.299px;width:300px;text-align:right;top:3.95px;font-size:11.7px;line-height:14px;font-weight:bold;color:#000;letter-spacing:-0.701px;">Box</div>
<div class="t" style="left:186.937px;width:300px;text-align:right;top:3.95px;font-size:11.7px;line-height:14px;font-weight:bold;color:#000;letter-spacing:-0.063px;">Qualidade</div>
<div class="t" style="left:244.076px;width:300px;text-align:right;top:3.95px;font-size:11.7px;line-height:14px;font-weight:bold;color:#000;letter-spacing:0.076px;">Lote</div>
<div style="left:1px;top:37px;width:535px;height:1px;background:#dddcc6"></div>
<div style="left:1px;top:54px;width:535px;height:1px;background:#dddcc6"></div>
<div style="left:1px;top:71px;width:535px;height:1px;background:#dddcc6"></div>
<div style="left:1px;top:88px;width:535px;height:1px;background:#dddcc6"></div>
<div style="left:1px;top:105px;width:535px;height:1px;background:#dddcc6"></div>
<div style="left:1px;top:122px;width:535px;height:1px;background:#dddcc6"></div>
<div style="left:1px;top:139px;width:535px;height:1px;background:#dddcc6"></div>
<div style="left:1px;top:156px;width:535px;height:1px;background:#dddcc6"></div>
<div style="left:1px;top:173px;width:535px;height:1px;background:#dddcc6"></div>
<div style="left:1px;top:190px;width:535px;height:1px;background:#dddcc6"></div>
<div style="left:1px;top:207px;width:535px;height:1px;background:#dddcc6"></div>
<div style="left:56px;top:20px;width:1px;height:188px;background:#dddcc6"></div>
<div style="left:117px;top:20px;width:1px;height:188px;background:#dddcc6"></div>
<div style="left:203px;top:20px;width:1px;height:188px;background:#dddcc6"></div>
<div style="left:258px;top:20px;width:1px;height:188px;background:#dddcc6"></div>
<div style="left:319px;top:20px;width:1px;height:188px;background:#dddcc6"></div>
<div style="left:379px;top:20px;width:1px;height:188px;background:#dddcc6"></div>
<div style="left:421px;top:20px;width:1px;height:188px;background:#dddcc6"></div>
<div style="left:493px;top:20px;width:1px;height:188px;background:#dddcc6"></div>
<div style="left:543px;top:20px;width:1px;height:188px;background:#dddcc6"></div>
<div style="left:5px;top:23px;width:13px;height:13px;border:2px solid #000;background:#fff"></div>
<div class="t" style="left:-254.507px;width:300px;text-align:right;top:22.95px;font-size:11.7px;line-height:14px;font-weight:bold;color:#000;letter-spacing:0.493px;">0</div>
<div class="t" style="left:62px;top:22.95px;font-size:11.7px;line-height:14px;font-weight:bold;color:#000;letter-spacing:0.493px;">33988</div>
<div class="t" style="left:123px;top:22.95px;font-size:11.7px;line-height:14px;font-weight:bold;color:#000;letter-spacing:0.493px;">0000985813</div>
<div class="t" style="left:-47.631px;width:300px;text-align:right;top:22.95px;font-size:11.7px;line-height:14px;font-weight:bold;color:#000;letter-spacing:0.369px;">14,413</div>
<div class="t" style="left:13.369px;width:300px;text-align:right;top:22.95px;font-size:11.7px;line-height:14px;font-weight:bold;color:#000;letter-spacing:0.369px;">35,000</div>
<div class="t" style="left:73.493px;width:300px;text-align:right;top:22.95px;font-size:11.7px;line-height:14px;font-weight:bold;color:#000;letter-spacing:0.493px;">000</div>
<div class="t" style="left:114.5px;width:300px;text-align:right;top:22.95px;font-size:11.7px;line-height:14px;font-weight:bold;color:#000;letter-spacing:-0.500px;">F-B8</div>
<div class="t" style="left:186.696px;width:300px;text-align:right;top:22.95px;font-size:11.7px;line-height:14px;font-weight:bold;color:#000;letter-spacing:-0.304px;">1Q</div>
<div class="t" style="left:237.493px;width:300px;text-align:right;top:22.95px;font-size:11.7px;line-height:14px;font-weight:bold;color:#000;letter-spacing:0.493px;">12591</div>
<div style="left:5px;top:40px;width:13px;height:13px;border:2px solid #000;background:#fff"></div>
<div class="t" style="left:-254.507px;width:300px;text-align:right;top:39.95px;font-size:11.7px;line-height:14px;font-weight:bold;color:#000;letter-spacing:0.493px;">0</div>
<div class="t" style="left:62px;top:39.95px;font-size:11.7px;line-height:14px;font-weight:bold;color:#000;letter-spacing:0.493px;">270040</div>
<div class="t" style="left:123px;top:39.95px;font-size:11.7px;line-height:14px;font-weight:bold;color:#000;letter-spacing:0.557px;">2020118387</div>
<div class="t" style="left:-47.631px;width:300px;text-align:right;top:39.95px;font-size:11.7px;line-height:14px;font-weight:bold;color:#000;letter-spacing:0.369px;">42,126</div>
<div class="t" style="left:13.387px;width:300px;text-align:right;top:39.95px;font-size:11.7px;line-height:14px;font-weight:bold;color:#000;letter-spacing:0.387px;">100,000</div>
<div class="t" style="left:73.493px;width:300px;text-align:right;top:39.95px;font-size:11.7px;line-height:14px;font-weight:bold;color:#000;letter-spacing:0.493px;">344</div>
<div class="t" style="left:186.696px;width:300px;text-align:right;top:39.95px;font-size:11.7px;line-height:14px;font-weight:bold;color:#000;letter-spacing:-0.304px;">1Q</div>
<div class="t" style="left:237.493px;width:300px;text-align:right;top:39.95px;font-size:11.7px;line-height:14px;font-weight:bold;color:#000;letter-spacing:0.493px;">415</div>
<div style="left:5px;top:57px;width:13px;height:13px;border:2px solid #000;background:#fff"></div>
<div class="t" style="left:-254.507px;width:300px;text-align:right;top:56.95px;font-size:11.7px;line-height:14px;font-weight:bold;color:#000;letter-spacing:0.493px;">0</div>
<div class="t" style="left:62px;top:56.95px;font-size:11.7px;line-height:14px;font-weight:bold;color:#000;letter-spacing:0.600px;">269811</div>
<div class="t" style="left:123px;top:56.95px;font-size:11.7px;line-height:14px;font-weight:bold;color:#000;letter-spacing:0.557px;">2020118320</div>
<div class="t" style="left:-47.631px;width:300px;text-align:right;top:56.95px;font-size:11.7px;line-height:14px;font-weight:bold;color:#000;letter-spacing:0.369px;">41,276</div>
<div class="t" style="left:13.387px;width:300px;text-align:right;top:56.95px;font-size:11.7px;line-height:14px;font-weight:bold;color:#000;letter-spacing:0.387px;">100,000</div>
<div class="t" style="left:73.493px;width:300px;text-align:right;top:56.95px;font-size:11.7px;line-height:14px;font-weight:bold;color:#000;letter-spacing:0.493px;">344</div>
<div class="t" style="left:186.696px;width:300px;text-align:right;top:56.95px;font-size:11.7px;line-height:14px;font-weight:bold;color:#000;letter-spacing:-0.304px;">1Q</div>
<div class="t" style="left:237.493px;width:300px;text-align:right;top:56.95px;font-size:11.7px;line-height:14px;font-weight:bold;color:#000;letter-spacing:0.493px;">415</div>
<div style="left:5px;top:74px;width:13px;height:13px;border:2px solid #000;background:#fff"></div>
<div class="t" style="left:-254.507px;width:300px;text-align:right;top:73.95px;font-size:11.7px;line-height:14px;font-weight:bold;color:#000;letter-spacing:0.493px;">0</div>
<div class="t" style="left:62px;top:73.95px;font-size:11.7px;line-height:14px;font-weight:bold;color:#000;letter-spacing:0.493px;">269767</div>
<div class="t" style="left:123px;top:73.95px;font-size:11.7px;line-height:14px;font-weight:bold;color:#000;letter-spacing:0.557px;">2020118279</div>
<div class="t" style="left:-47.631px;width:300px;text-align:right;top:73.95px;font-size:11.7px;line-height:14px;font-weight:bold;color:#000;letter-spacing:0.369px;">25,426</div>
<div class="t" style="left:13.369px;width:300px;text-align:right;top:73.95px;font-size:11.7px;line-height:14px;font-weight:bold;color:#000;letter-spacing:0.369px;">62,000</div>
<div class="t" style="left:73.493px;width:300px;text-align:right;top:73.95px;font-size:11.7px;line-height:14px;font-weight:bold;color:#000;letter-spacing:0.493px;">344</div>
<div class="t" style="left:186.696px;width:300px;text-align:right;top:73.95px;font-size:11.7px;line-height:14px;font-weight:bold;color:#000;letter-spacing:-0.304px;">1Q</div>
<div class="t" style="left:237.493px;width:300px;text-align:right;top:73.95px;font-size:11.7px;line-height:14px;font-weight:bold;color:#000;letter-spacing:0.493px;">415</div>
<div style="left:5px;top:91px;width:13px;height:13px;border:2px solid #000;background:#fff"></div>
<div class="t" style="left:-254.507px;width:300px;text-align:right;top:90.95px;font-size:11.7px;line-height:14px;font-weight:bold;color:#000;letter-spacing:0.493px;">0</div>
<div class="t" style="left:62px;top:90.95px;font-size:11.7px;line-height:14px;font-weight:bold;color:#000;letter-spacing:0.493px;">269825</div>
<div class="t" style="left:123px;top:90.95px;font-size:11.7px;line-height:14px;font-weight:bold;color:#000;letter-spacing:0.557px;">2020118323</div>
<div class="t" style="left:-47.631px;width:300px;text-align:right;top:90.95px;font-size:11.7px;line-height:14px;font-weight:bold;color:#000;letter-spacing:0.369px;">40,876</div>
<div class="t" style="left:13.387px;width:300px;text-align:right;top:90.95px;font-size:11.7px;line-height:14px;font-weight:bold;color:#000;letter-spacing:0.387px;">101,000</div>
<div class="t" style="left:73.493px;width:300px;text-align:right;top:90.95px;font-size:11.7px;line-height:14px;font-weight:bold;color:#000;letter-spacing:0.493px;">344</div>
<div class="t" style="left:186.696px;width:300px;text-align:right;top:90.95px;font-size:11.7px;line-height:14px;font-weight:bold;color:#000;letter-spacing:-0.304px;">1Q</div>
<div class="t" style="left:237.493px;width:300px;text-align:right;top:90.95px;font-size:11.7px;line-height:14px;font-weight:bold;color:#000;letter-spacing:0.493px;">415</div>
<div style="left:5px;top:108px;width:13px;height:13px;border:2px solid #000;background:#fff"></div>
<div class="t" style="left:-254.507px;width:300px;text-align:right;top:107.95px;font-size:11.7px;line-height:14px;font-weight:bold;color:#000;letter-spacing:0.493px;">0</div>
<div class="t" style="left:62px;top:107.95px;font-size:11.7px;line-height:14px;font-weight:bold;color:#000;letter-spacing:0.493px;">269834</div>
<div class="t" style="left:123px;top:107.95px;font-size:11.7px;line-height:14px;font-weight:bold;color:#000;letter-spacing:0.557px;">2020118324</div>
<div class="t" style="left:-47.631px;width:300px;text-align:right;top:107.95px;font-size:11.7px;line-height:14px;font-weight:bold;color:#000;letter-spacing:0.369px;">40,476</div>
<div class="t" style="left:13.387px;width:300px;text-align:right;top:107.95px;font-size:11.7px;line-height:14px;font-weight:bold;color:#000;letter-spacing:0.387px;">100,000</div>
<div class="t" style="left:73.493px;width:300px;text-align:right;top:107.95px;font-size:11.7px;line-height:14px;font-weight:bold;color:#000;letter-spacing:0.493px;">344</div>
<div class="t" style="left:186.696px;width:300px;text-align:right;top:107.95px;font-size:11.7px;line-height:14px;font-weight:bold;color:#000;letter-spacing:-0.304px;">1Q</div>
<div class="t" style="left:237.493px;width:300px;text-align:right;top:107.95px;font-size:11.7px;line-height:14px;font-weight:bold;color:#000;letter-spacing:0.493px;">415</div>
<div style="left:5px;top:125px;width:13px;height:13px;border:2px solid #000;background:#fff"></div>
<div class="t" style="left:-254.507px;width:300px;text-align:right;top:124.95px;font-size:11.7px;line-height:14px;font-weight:bold;color:#000;letter-spacing:0.493px;">0</div>
<div class="t" style="left:62px;top:124.95px;font-size:11.7px;line-height:14px;font-weight:bold;color:#000;letter-spacing:0.493px;">269842</div>
<div class="t" style="left:123px;top:124.95px;font-size:11.7px;line-height:14px;font-weight:bold;color:#000;letter-spacing:0.557px;">2020118325</div>
<div class="t" style="left:-47.631px;width:300px;text-align:right;top:124.95px;font-size:11.7px;line-height:14px;font-weight:bold;color:#000;letter-spacing:0.369px;">40,776</div>
<div class="t" style="left:13.387px;width:300px;text-align:right;top:124.95px;font-size:11.7px;line-height:14px;font-weight:bold;color:#000;letter-spacing:0.387px;">100,000</div>
<div class="t" style="left:73.493px;width:300px;text-align:right;top:124.95px;font-size:11.7px;line-height:14px;font-weight:bold;color:#000;letter-spacing:0.493px;">344</div>
<div class="t" style="left:186.696px;width:300px;text-align:right;top:124.95px;font-size:11.7px;line-height:14px;font-weight:bold;color:#000;letter-spacing:-0.304px;">1Q</div>
<div class="t" style="left:237.493px;width:300px;text-align:right;top:124.95px;font-size:11.7px;line-height:14px;font-weight:bold;color:#000;letter-spacing:0.493px;">415</div>
<div style="left:5px;top:142px;width:13px;height:13px;border:2px solid #000;background:#fff"></div>
<div class="t" style="left:-254.507px;width:300px;text-align:right;top:141.95px;font-size:11.7px;line-height:14px;font-weight:bold;color:#000;letter-spacing:0.493px;">0</div>
<div class="t" style="left:62px;top:141.95px;font-size:11.7px;line-height:14px;font-weight:bold;color:#000;letter-spacing:0.493px;">269846</div>
<div class="t" style="left:123px;top:141.95px;font-size:11.7px;line-height:14px;font-weight:bold;color:#000;letter-spacing:0.557px;">2020118327</div>
<div class="t" style="left:-47.631px;width:300px;text-align:right;top:141.95px;font-size:11.7px;line-height:14px;font-weight:bold;color:#000;letter-spacing:0.369px;">42,776</div>
<div class="t" style="left:13.387px;width:300px;text-align:right;top:141.95px;font-size:11.7px;line-height:14px;font-weight:bold;color:#000;letter-spacing:0.387px;">106,000</div>
<div class="t" style="left:73.493px;width:300px;text-align:right;top:141.95px;font-size:11.7px;line-height:14px;font-weight:bold;color:#000;letter-spacing:0.493px;">355</div>
<div class="t" style="left:186.696px;width:300px;text-align:right;top:141.95px;font-size:11.7px;line-height:14px;font-weight:bold;color:#000;letter-spacing:-0.304px;">1Q</div>
<div class="t" style="left:237.493px;width:300px;text-align:right;top:141.95px;font-size:11.7px;line-height:14px;font-weight:bold;color:#000;letter-spacing:0.493px;">415</div>
<div style="left:5px;top:159px;width:13px;height:13px;border:2px solid #000;background:#fff"></div>
<div class="t" style="left:-254.507px;width:300px;text-align:right;top:158.95px;font-size:11.7px;line-height:14px;font-weight:bold;color:#000;letter-spacing:0.493px;">0</div>
<div class="t" style="left:62px;top:158.95px;font-size:11.7px;line-height:14px;font-weight:bold;color:#000;letter-spacing:0.493px;">269878</div>
<div class="t" style="left:123px;top:158.95px;font-size:11.7px;line-height:14px;font-weight:bold;color:#000;letter-spacing:0.557px;">2020118337</div>
<div class="t" style="left:-47.631px;width:300px;text-align:right;top:158.95px;font-size:11.7px;line-height:14px;font-weight:bold;color:#000;letter-spacing:0.369px;">42,126</div>
<div class="t" style="left:13.387px;width:300px;text-align:right;top:158.95px;font-size:11.7px;line-height:14px;font-weight:bold;color:#000;letter-spacing:0.387px;">100,000</div>
<div class="t" style="left:73.493px;width:300px;text-align:right;top:158.95px;font-size:11.7px;line-height:14px;font-weight:bold;color:#000;letter-spacing:0.493px;">355</div>
<div class="t" style="left:186.696px;width:300px;text-align:right;top:158.95px;font-size:11.7px;line-height:14px;font-weight:bold;color:#000;letter-spacing:-0.304px;">1Q</div>
<div class="t" style="left:237.493px;width:300px;text-align:right;top:158.95px;font-size:11.7px;line-height:14px;font-weight:bold;color:#000;letter-spacing:0.493px;">415</div>
<div style="left:5px;top:176px;width:13px;height:13px;border:2px solid #000;background:#fff"></div>
<div class="t" style="left:-254.507px;width:300px;text-align:right;top:175.95px;font-size:11.7px;line-height:14px;font-weight:bold;color:#000;letter-spacing:0.493px;">0</div>
<div class="t" style="left:62px;top:175.95px;font-size:11.7px;line-height:14px;font-weight:bold;color:#000;letter-spacing:0.493px;">269902</div>
<div class="t" style="left:123px;top:175.95px;font-size:11.7px;line-height:14px;font-weight:bold;color:#000;letter-spacing:0.557px;">2020118343</div>
<div class="t" style="left:-47.631px;width:300px;text-align:right;top:175.95px;font-size:11.7px;line-height:14px;font-weight:bold;color:#000;letter-spacing:0.369px;">42,776</div>
<div class="t" style="left:13.387px;width:300px;text-align:right;top:175.95px;font-size:11.7px;line-height:14px;font-weight:bold;color:#000;letter-spacing:0.387px;">102,000</div>
<div class="t" style="left:73.493px;width:300px;text-align:right;top:175.95px;font-size:11.7px;line-height:14px;font-weight:bold;color:#000;letter-spacing:0.493px;">355</div>
<div class="t" style="left:186.696px;width:300px;text-align:right;top:175.95px;font-size:11.7px;line-height:14px;font-weight:bold;color:#000;letter-spacing:-0.304px;">1Q</div>
<div class="t" style="left:237.493px;width:300px;text-align:right;top:175.95px;font-size:11.7px;line-height:14px;font-weight:bold;color:#000;letter-spacing:0.493px;">415</div>
<div style="left:5px;top:193px;width:13px;height:13px;border:2px solid #000;background:#fff"></div>
<div class="t" style="left:-254.507px;width:300px;text-align:right;top:192.95px;font-size:11.7px;line-height:14px;font-weight:bold;color:#000;letter-spacing:0.493px;">0</div>
<div class="t" style="left:62px;top:192.95px;font-size:11.7px;line-height:14px;font-weight:bold;color:#000;letter-spacing:0.493px;">269913</div>
<div class="t" style="left:123px;top:192.95px;font-size:11.7px;line-height:14px;font-weight:bold;color:#000;letter-spacing:0.557px;">2020118345</div>
<div class="t" style="left:-47.631px;width:300px;text-align:right;top:192.95px;font-size:11.7px;line-height:14px;font-weight:bold;color:#000;letter-spacing:0.369px;">42,326</div>
<div class="t" style="left:13.387px;width:300px;text-align:right;top:192.95px;font-size:11.7px;line-height:14px;font-weight:bold;color:#000;letter-spacing:0.387px;">101,000</div>
<div class="t" style="left:73.493px;width:300px;text-align:right;top:192.95px;font-size:11.7px;line-height:14px;font-weight:bold;color:#000;letter-spacing:0.493px;">355</div>
<div class="t" style="left:186.696px;width:300px;text-align:right;top:192.95px;font-size:11.7px;line-height:14px;font-weight:bold;color:#000;letter-spacing:-0.304px;">1Q</div>
<div class="t" style="left:237.493px;width:300px;text-align:right;top:192.95px;font-size:11.7px;line-height:14px;font-weight:bold;color:#000;letter-spacing:0.493px;">415</div>
</div>
<div style="left:466px;top:509px;width:535px;height:17px;background:linear-gradient(#fefefe,#f6f5f1 3px,#f6f5f1 12px,#fefefe)"></div>
<div style="left:467px;top:510px;width:15px;height:15px;background:linear-gradient(135deg,#d6e2fd,#bccdf7);border-radius:2px;box-shadow:inset 0 0 0 1px #e4ecfe, 0 0 0 0.5px #b8c8ec"></div>
<svg style="position:absolute;left:467px;top:510px" width="15" height="15"><path d="M9 4 L5.5 7.5 L9 11" stroke="#4d6185" stroke-width="2" fill="none"/></svg>
<div style="left:484px;top:510px;width:148px;height:15px;background:linear-gradient(#cddcfc,#b8cdf8);border:1px solid #9db4ea;border-radius:2px;box-sizing:border-box"></div>
<div style="left:554px;top:514px;width:1px;height:6px;background:#8ea6dd"></div>
<div style="left:556px;top:514px;width:1px;height:6px;background:#8ea6dd"></div>
<div style="left:558px;top:514px;width:1px;height:6px;background:#8ea6dd"></div>
<div style="left:560px;top:514px;width:1px;height:6px;background:#8ea6dd"></div>
<div style="left:1001px;top:303px;width:16px;height:222px;background:linear-gradient(90deg,#fefefe,#f6f5f1 3px,#f6f5f1 12px,#fefefe)"></div>
<div style="left:1001px;top:305px;width:15px;height:15px;background:linear-gradient(135deg,#d6e2fd,#bccdf7);border-radius:2px;box-shadow:inset 0 0 0 1px #e4ecfe, 0 0 0 0.5px #b8c8ec"></div>
<svg style="position:absolute;left:1001px;top:305px" width="15" height="15"><path d="M4 9 L7.5 5.5 L11 9" stroke="#4d6185" stroke-width="2" fill="none"/></svg>
<div style="left:1001px;top:321px;width:16px;height:86px;background:linear-gradient(90deg,#cddcfc,#b8cdf8);border:1px solid #9db4ea;border-radius:2px"></div>
<div style="left:1001px;top:493px;width:15px;height:15px;background:linear-gradient(135deg,#d6e2fd,#bccdf7);border-radius:2px;box-shadow:inset 0 0 0 1px #e4ecfe, 0 0 0 0.5px #b8c8ec"></div>
<svg style="position:absolute;left:1001px;top:493px" width="15" height="15"><path d="M4 6 L7.5 9.5 L11 6" stroke="#4d6185" stroke-width="2" fill="none"/></svg>
<div style="left:984px;top:510px;width:15px;height:15px;background:linear-gradient(135deg,#d6e2fd,#bccdf7);border-radius:2px;box-shadow:inset 0 0 0 1px #e4ecfe, 0 0 0 0.5px #b8c8ec"></div>
<svg style="position:absolute;left:984px;top:510px" width="15" height="15"><path d="M6 4 L9.5 7.5 L6 11" stroke="#4d6185" stroke-width="2" fill="none"/></svg>
<div style="left:1001px;top:509px;width:16px;height:17px;background:#ece9d8"></div>
<div style="left:1005px;top:360px;width:7px;height:1px;background:#8ea6dd"></div>
<div style="left:1005px;top:362px;width:7px;height:1px;background:#8ea6dd"></div>
<div style="left:1005px;top:364px;width:7px;height:1px;background:#8ea6dd"></div>
<div style="left:1005px;top:366px;width:7px;height:1px;background:#8ea6dd"></div>
<div style="left:1017px;top:286px;width:2px;height:427px;background:#d4d0c8"></div>
<div style="left:5px;top:503px;width:449px;height:5px;background:#fafaf6"></div>
<div style="left:466px;top:525px;width:551px;height:6px;background:#fafaf6"></div>
<div style="left:8px;top:508px;width:189px;height:16px;background:#808080"></div>
<div class="t" style="left:-198px;width:600px;text-align:center;top:508.95px;font-size:11.7px;line-height:14px;font-weight:bold;color:#fff;letter-spacing:-0.044px;">Nuance</div>
<div style="left:7px;top:524px;width:190px;height:130px;overflow:hidden;background:#fdfde3;">
<div style="left:1px;top:1px;width:165px;height:18px;background:linear-gradient(#b9cff6,#a6c0ee)"></div>
<div style="left:1px;top:19px;width:165px;height:1px;background:#7f9ed6"></div>
<div style="left:11px;top:1px;width:1px;height:19px;background:#7f9ed6"></div>
<div style="left:12px;top:1px;width:1px;height:19px;background:#dbe6fb"></div>
<div class="t" style="left:15px;top:3.95px;font-size:11.7px;line-height:14px;font-weight:bold;color:#000;letter-spacing:-0.044px;">Nuance</div>
<div style="left:76px;top:1px;width:1px;height:19px;background:#7f9ed6"></div>
<div style="left:77px;top:1px;width:1px;height:19px;background:#dbe6fb"></div>
<div class="t" style="left:79px;top:3.95px;font-size:11.7px;line-height:14px;font-weight:bold;color:#000;letter-spacing:0.064px;">Quantidade</div>
<div style="left:164px;top:1px;width:1px;height:19px;background:#7f9ed6"></div>
<div style="left:165px;top:1px;width:1px;height:19px;background:#dbe6fb"></div>
<div style="left:4px;top:6px;width:1px;height:1px;background:#000"></div>
<div style="left:6px;top:6px;width:5px;height:1px;background:#000"></div>
<div style="left:4px;top:8px;width:1px;height:1px;background:#000"></div>
<div style="left:6px;top:8px;width:5px;height:1px;background:#000"></div>
<div style="left:4px;top:10px;width:1px;height:1px;background:#000"></div>
<div style="left:6px;top:10px;width:5px;height:1px;background:#000"></div>
<div style="left:4px;top:12px;width:1px;height:1px;background:#000"></div>
<div style="left:6px;top:12px;width:5px;height:1px;background:#000"></div>
<div style="left:4px;top:14px;width:1px;height:1px;background:#000"></div>
<div style="left:6px;top:14px;width:5px;height:1px;background:#000"></div>
<div style="left:1px;top:20px;width:11px;height:18px;background:#a9c2ef"></div>
<div style="left:1px;top:37px;width:165px;height:1px;background:#b8b49c"></div>
<div style="left:76px;top:20px;width:1px;height:18px;background:#c9c5ad"></div>
<div style="left:164px;top:20px;width:1px;height:18px;background:#c9c5ad"></div>
<svg style="position:absolute;left:5px;top:24px" width="7" height="10"><path d="M0 0 L5.5 4.5 L0 9.5Z" fill="#000"/></svg>
<div class="t" style="left:15px;top:21.95px;font-size:11.7px;line-height:14px;font-weight:bold;color:#000;letter-spacing:0.493px;">344</div>
<div class="t" style="left:-138.613px;width:300px;text-align:right;top:21.95px;font-size:11.7px;line-height:14px;font-weight:bold;color:#000;letter-spacing:0.387px;">367,000</div>
<div style="left:1px;top:105px;width:165px;height:24px;background:#9fbcf2"></div>
<div style="left:1px;top:105px;width:165px;height:1px;background:#7895d2"></div>
<div style="left:11px;top:105px;width:1px;height:24px;background:#7895d2"></div>
<div style="left:79px;top:108px;width:83px;height:18px;background:#b3cbf2;border:1px solid #7896cf"></div>
</div>
<div style="left:7px;top:524px;width:190px;height:130px;border:1px solid #183c84"></div>
<div style="left:196px;top:506px;width:1px;height:148px;background:#d0d0d8"></div>
<div style="left:197px;top:506px;width:1px;height:148px;background:#a0a0f8"></div>
<div style="left:198px;top:506px;width:1px;height:148px;background:#000088"></div>
<div style="left:199px;top:506px;width:1px;height:148px;background:#f8f8ff"></div>
<div style="left:200px;top:506px;width:1px;height:148px;background:#000088"></div>
<div style="left:201px;top:506px;width:1px;height:148px;background:#000088"></div>
<div style="left:202px;top:506px;width:1px;height:148px;background:#9898f0"></div>
<div style="left:203px;top:506px;width:1px;height:148px;background:#000088"></div>
<div style="left:204px;top:506px;width:1px;height:148px;background:#ffffff"></div>
<div style="left:205px;top:506px;width:1px;height:148px;background:#f4f4f4"></div>
<div style="left:206px;top:506px;width:1px;height:148px;background:#f8f8f4"></div>
<div style="left:208px;top:508px;width:245px;height:16px;background:#808080"></div>
<div class="t" style="left:30px;width:600px;text-align:center;top:508.95px;font-size:11.7px;line-height:14px;font-weight:bold;color:#fff;letter-spacing:-0.186px;">Embalagem</div>
<div style="left:207px;top:524px;width:246px;height:130px;overflow:hidden;background:#fdfde3;">
<div style="left:1px;top:1px;width:246px;height:18px;background:linear-gradient(#b9cff6,#a6c0ee)"></div>
<div style="left:1px;top:19px;width:246px;height:1px;background:#7f9ed6"></div>
<div style="left:11px;top:1px;width:1px;height:19px;background:#7f9ed6"></div>
<div style="left:12px;top:1px;width:1px;height:19px;background:#dbe6fb"></div>
<div class="t" style="left:15px;top:3.95px;font-size:11.7px;line-height:14px;font-weight:bold;color:#000;letter-spacing:-0.104px;">Descrição</div>
<div style="left:218px;top:1px;width:1px;height:19px;background:#7f9ed6"></div>
<div style="left:219px;top:1px;width:1px;height:19px;background:#dbe6fb"></div>
<div class="t" style="left:221px;top:3.95px;font-size:11.7px;line-height:14px;font-weight:bold;color:#000;letter-spacing:0.064px;">Quantidade</div>
<div style="left:293px;top:1px;width:1px;height:19px;background:#7f9ed6"></div>
<div style="left:294px;top:1px;width:1px;height:19px;background:#dbe6fb"></div>
<div style="left:4px;top:6px;width:1px;height:1px;background:#000"></div>
<div style="left:6px;top:6px;width:5px;height:1px;background:#000"></div>
<div style="left:4px;top:8px;width:1px;height:1px;background:#000"></div>
<div style="left:6px;top:8px;width:5px;height:1px;background:#000"></div>
<div style="left:4px;top:10px;width:1px;height:1px;background:#000"></div>
<div style="left:6px;top:10px;width:5px;height:1px;background:#000"></div>
<div style="left:4px;top:12px;width:1px;height:1px;background:#000"></div>
<div style="left:6px;top:12px;width:5px;height:1px;background:#000"></div>
<div style="left:4px;top:14px;width:1px;height:1px;background:#000"></div>
<div style="left:6px;top:14px;width:5px;height:1px;background:#000"></div>
<div style="left:1px;top:20px;width:11px;height:18px;background:#a9c2ef"></div>
<div style="left:1px;top:37px;width:246px;height:1px;background:#b8b49c"></div>
<div style="left:218px;top:20px;width:1px;height:18px;background:#c9c5ad"></div>
<div style="left:293px;top:20px;width:1px;height:18px;background:#c9c5ad"></div>
<svg style="position:absolute;left:5px;top:24px" width="7" height="10"><path d="M0 0 L5.5 4.5 L0 9.5Z" fill="#000"/></svg>
<div class="t" style="left:15px;top:21.95px;font-size:11.7px;line-height:14px;font-weight:bold;color:#000;letter-spacing:-0.049px;">ROLO - 60 A 120 M CANUDO 1,65</div>
<div style="left:1px;top:87px;width:246px;height:25px;background:#9fbcf2"></div>
<div style="left:1px;top:87px;width:246px;height:1px;background:#7895d2"></div>
<div style="left:11px;top:87px;width:1px;height:25px;background:#7895d2"></div>
<div style="left:221px;top:90px;width:42px;height:19px;background:#b3cbf2;border:1px solid #7896cf"></div>
<div style="left:1px;top:112px;width:246px;height:17px;background:linear-gradient(#fefefe,#f6f5f1 3px,#f6f5f1 12px,#fefefe)"></div>
</div>
<div style="left:208px;top:637px;width:15px;height:15px;background:linear-gradient(135deg,#d6e2fd,#bccdf7);border-radius:2px;box-shadow:inset 0 0 0 1px #e4ecfe, 0 0 0 0.5px #b8c8ec"></div>
<svg style="position:absolute;left:208px;top:637px" width="15" height="15"><path d="M9 4 L5.5 7.5 L9 11" stroke="#4d6185" stroke-width="2" fill="none"/></svg>
<div style="left:225px;top:637px;width:166px;height:15px;background:linear-gradient(#cddcfc,#b8cdf8);border:1px solid #9db4ea;border-radius:2px"></div>
<div style="left:304px;top:641px;width:1px;height:6px;background:#8ea6dd"></div>
<div style="left:306px;top:641px;width:1px;height:6px;background:#8ea6dd"></div>
<div style="left:308px;top:641px;width:1px;height:6px;background:#8ea6dd"></div>
<div style="left:310px;top:641px;width:1px;height:6px;background:#8ea6dd"></div>
<div style="left:436px;top:637px;width:15px;height:15px;background:linear-gradient(135deg,#d6e2fd,#bccdf7);border-radius:2px;box-shadow:inset 0 0 0 1px #e4ecfe, 0 0 0 0.5px #b8c8ec"></div>
<svg style="position:absolute;left:436px;top:637px" width="15" height="15"><path d="M6 4 L9.5 7.5 L6 11" stroke="#4d6185" stroke-width="2" fill="none"/></svg>
<div style="left:207px;top:524px;width:246px;height:130px;border:1px solid #183c84"></div>
<div style="left:468px;top:531px;width:189px;height:16px;background:#808080"></div>
<div class="t" style="left:262px;width:600px;text-align:center;top:531.95px;font-size:11.7px;line-height:14px;font-weight:bold;color:#fff;letter-spacing:-0.044px;">Nuance</div>
<div style="left:467px;top:547px;width:190px;height:130px;overflow:hidden;background:#fdfde3;">
<div style="left:1px;top:1px;width:189px;height:18px;background:linear-gradient(#b9cff6,#a6c0ee)"></div>
<div style="left:1px;top:19px;width:189px;height:1px;background:#7f9ed6"></div>
<div style="left:11px;top:1px;width:1px;height:19px;background:#7f9ed6"></div>
<div style="left:12px;top:1px;width:1px;height:19px;background:#dbe6fb"></div>
<div class="t" style="left:15px;top:3.95px;font-size:11.7px;line-height:14px;font-weight:bold;color:#000;letter-spacing:-0.994px;">CDNUANCE</div>
<div style="left:93px;top:1px;width:1px;height:19px;background:#7f9ed6"></div>
<div style="left:94px;top:1px;width:1px;height:19px;background:#dbe6fb"></div>
<div class="t" style="left:96px;top:3.95px;font-size:11.7px;line-height:14px;font-weight:bold;color:#000;letter-spacing:-0.700px;">QUANTIDADE</div>
<div style="left:188px;top:1px;width:1px;height:19px;background:#7f9ed6"></div>
<div style="left:189px;top:1px;width:1px;height:19px;background:#dbe6fb"></div>
<div style="left:4px;top:6px;width:1px;height:1px;background:#000"></div>
<div style="left:6px;top:6px;width:5px;height:1px;background:#000"></div>
<div style="left:4px;top:8px;width:1px;height:1px;background:#000"></div>
<div style="left:6px;top:8px;width:5px;height:1px;background:#000"></div>
<div style="left:4px;top:10px;width:1px;height:1px;background:#000"></div>
<div style="left:6px;top:10px;width:5px;height:1px;background:#000"></div>
<div style="left:4px;top:12px;width:1px;height:1px;background:#000"></div>
<div style="left:6px;top:12px;width:5px;height:1px;background:#000"></div>
<div style="left:4px;top:14px;width:1px;height:1px;background:#000"></div>
<div style="left:6px;top:14px;width:5px;height:1px;background:#000"></div>
<div style="left:1px;top:20px;width:11px;height:18px;background:#a9c2ef"></div>
<div style="left:1px;top:37px;width:189px;height:1px;background:#b8b49c"></div>
<div style="left:93px;top:20px;width:1px;height:18px;background:#c9c5ad"></div>
<div style="left:188px;top:20px;width:1px;height:18px;background:#c9c5ad"></div>
<div class="t" style="left:15px;top:21.95px;font-size:11.7px;line-height:14px;font-weight:bold;color:#000;letter-spacing:0.493px;">000</div>
<div class="t" style="left:-114.631px;width:300px;text-align:right;top:21.95px;font-size:11.7px;line-height:14px;font-weight:bold;color:#000;letter-spacing:0.369px;">35,000</div>
<div style="left:1px;top:38px;width:11px;height:18px;background:#a9c2ef"></div>
<div style="left:1px;top:55px;width:189px;height:1px;background:#b8b49c"></div>
<div style="left:93px;top:38px;width:1px;height:18px;background:#c9c5ad"></div>
<div style="left:188px;top:38px;width:1px;height:18px;background:#c9c5ad"></div>
<svg style="position:absolute;left:5px;top:42px" width="7" height="10"><path d="M0 0 L5.5 4.5 L0 9.5Z" fill="#000"/></svg>
<div class="t" style="left:15px;top:39.95px;font-size:11.7px;line-height:14px;font-weight:bold;color:#000;letter-spacing:0.493px;">344</div>
<div class="t" style="left:-114.672px;width:300px;text-align:right;top:39.95px;font-size:11.7px;line-height:14px;font-weight:bold;color:#000;letter-spacing:0.328px;">1.363,000</div>
<div style="left:1px;top:56px;width:11px;height:18px;background:#a9c2ef"></div>
<div style="left:1px;top:73px;width:189px;height:1px;background:#b8b49c"></div>
<div style="left:93px;top:56px;width:1px;height:18px;background:#c9c5ad"></div>
<div style="left:188px;top:56px;width:1px;height:18px;background:#c9c5ad"></div>
<div class="t" style="left:15px;top:57.95px;font-size:11.7px;line-height:14px;font-weight:bold;color:#000;letter-spacing:0.493px;">355</div>
<div class="t" style="left:-114.613px;width:300px;text-align:right;top:57.95px;font-size:11.7px;line-height:14px;font-weight:bold;color:#000;letter-spacing:0.387px;">409,000</div>
<div style="left:1px;top:87px;width:189px;height:24px;background:#9fbcf2"></div>
<div style="left:1px;top:87px;width:189px;height:1px;background:#7895d2"></div>
<div style="left:11px;top:87px;width:1px;height:24px;background:#7895d2"></div>
<div style="left:96px;top:90px;width:91px;height:18px;background:#b3cbf2;border:1px solid #7896cf"></div>
<div style="left:1px;top:111px;width:190px;height:17px;background:linear-gradient(#fefefe,#f6f5f1 3px,#f6f5f1 12px,#fefefe)"></div>
</div>
<div style="left:468px;top:659px;width:15px;height:15px;background:linear-gradient(135deg,#d6e2fd,#bccdf7);border-radius:2px;box-shadow:inset 0 0 0 1px #e4ecfe, 0 0 0 0.5px #b8c8ec"></div>
<svg style="position:absolute;left:468px;top:659px" width="15" height="15"><path d="M9 4 L5.5 7.5 L9 11" stroke="#4d6185" stroke-width="2" fill="none"/></svg>
<div style="left:484px;top:659px;width:157px;height:15px;background:linear-gradient(#cddcfc,#b8cdf8);border:1px solid #9db4ea;border-radius:2px"></div>
<div style="left:558px;top:663px;width:1px;height:6px;background:#8ea6dd"></div>
<div style="left:560px;top:663px;width:1px;height:6px;background:#8ea6dd"></div>
<div style="left:562px;top:663px;width:1px;height:6px;background:#8ea6dd"></div>
<div style="left:564px;top:663px;width:1px;height:6px;background:#8ea6dd"></div>
<div style="left:639px;top:659px;width:15px;height:15px;background:linear-gradient(135deg,#d6e2fd,#bccdf7);border-radius:2px;box-shadow:inset 0 0 0 1px #e4ecfe, 0 0 0 0.5px #b8c8ec"></div>
<svg style="position:absolute;left:639px;top:659px" width="15" height="15"><path d="M6 4 L9.5 7.5 L6 11" stroke="#4d6185" stroke-width="2" fill="none"/></svg>
<div style="left:467px;top:547px;width:190px;height:130px;border:1px solid #183c84"></div>
<div style="left:656px;top:529px;width:1px;height:148px;background:#d0d0d8"></div>
<div style="left:657px;top:529px;width:1px;height:148px;background:#a0a0f8"></div>
<div style="left:658px;top:529px;width:1px;height:148px;background:#000088"></div>
<div style="left:659px;top:529px;width:1px;height:148px;background:#f8f8ff"></div>
<div style="left:660px;top:529px;width:1px;height:148px;background:#000088"></div>
<div style="left:661px;top:529px;width:1px;height:148px;background:#000088"></div>
<div style="left:662px;top:529px;width:1px;height:148px;background:#9898f0"></div>
<div style="left:663px;top:529px;width:1px;height:148px;background:#000088"></div>
<div style="left:664px;top:529px;width:1px;height:148px;background:#ffffff"></div>
<div style="left:665px;top:529px;width:1px;height:148px;background:#f4f4f4"></div>
<div style="left:666px;top:529px;width:1px;height:148px;background:#f8f8f4"></div>
<div style="left:668px;top:531px;width:348px;height:16px;background:#808080"></div>
<div class="t" style="left:542px;width:600px;text-align:center;top:531.95px;font-size:11.7px;line-height:14px;font-weight:bold;color:#fff;letter-spacing:-0.186px;">Embalagem</div>
<div style="left:667px;top:547px;width:349px;height:130px;overflow:hidden;background:#fdfde3;">
<div style="left:1px;top:1px;width:349px;height:18px;background:linear-gradient(#b9cff6,#a6c0ee)"></div>
<div style="left:1px;top:19px;width:349px;height:1px;background:#7f9ed6"></div>
<div style="left:11px;top:1px;width:1px;height:19px;background:#7f9ed6"></div>
<div style="left:12px;top:1px;width:1px;height:19px;background:#dbe6fb"></div>
<div class="t" style="left:15px;top:3.95px;font-size:11.7px;line-height:14px;font-weight:bold;color:#000;letter-spacing:-1.054px;">CDEMBALAGEM</div>
<div style="left:118px;top:1px;width:1px;height:19px;background:#7f9ed6"></div>
<div style="left:119px;top:1px;width:1px;height:19px;background:#dbe6fb"></div>
<div class="t" style="left:121px;top:3.95px;font-size:11.7px;line-height:14px;font-weight:bold;color:#000;letter-spacing:-0.912px;">DESCRICAO</div>
<div style="left:328px;top:1px;width:1px;height:19px;background:#7f9ed6"></div>
<div style="left:329px;top:1px;width:1px;height:19px;background:#dbe6fb"></div>
<div class="t" style="left:331px;top:3.95px;font-size:11.7px;line-height:14px;font-weight:bold;color:#000;letter-spacing:-0.700px;">QUANTIDADE</div>
<div style="left:433px;top:1px;width:1px;height:19px;background:#7f9ed6"></div>
<div style="left:434px;top:1px;width:1px;height:19px;background:#dbe6fb"></div>
<div style="left:4px;top:6px;width:1px;height:1px;background:#000"></div>
<div style="left:6px;top:6px;width:5px;height:1px;background:#000"></div>
<div style="left:4px;top:8px;width:1px;height:1px;background:#000"></div>
<div style="left:6px;top:8px;width:5px;height:1px;background:#000"></div>
<div style="left:4px;top:10px;width:1px;height:1px;background:#000"></div>
<div style="left:6px;top:10px;width:5px;height:1px;background:#000"></div>
<div style="left:4px;top:12px;width:1px;height:1px;background:#000"></div>
<div style="left:6px;top:12px;width:5px;height:1px;background:#000"></div>
<div style="left:4px;top:14px;width:1px;height:1px;background:#000"></div>
<div style="left:6px;top:14px;width:5px;height:1px;background:#000"></div>
<div style="left:1px;top:20px;width:11px;height:18px;background:#a9c2ef"></div>
<div style="left:1px;top:37px;width:349px;height:1px;background:#b8b49c"></div>
<div style="left:118px;top:20px;width:1px;height:18px;background:#c9c5ad"></div>
<div style="left:328px;top:20px;width:1px;height:18px;background:#c9c5ad"></div>
<div style="left:433px;top:20px;width:1px;height:18px;background:#c9c5ad"></div>
<div class="t" style="left:-184.507px;width:300px;text-align:right;top:21.95px;font-size:11.7px;line-height:14px;font-weight:bold;color:#000;letter-spacing:0.493px;">2500</div>
<div class="t" style="left:121px;top:21.95px;font-size:11.7px;line-height:14px;font-weight:bold;color:#000;letter-spacing:-0.056px;">ROLO - 15 A 59,9 M CANUDO 1,65</div>
<div style="left:1px;top:38px;width:11px;height:18px;background:#a9c2ef"></div>
<div style="left:1px;top:55px;width:349px;height:1px;background:#b8b49c"></div>
<div style="left:118px;top:38px;width:1px;height:18px;background:#c9c5ad"></div>
<div style="left:328px;top:38px;width:1px;height:18px;background:#c9c5ad"></div>
<div style="left:433px;top:38px;width:1px;height:18px;background:#c9c5ad"></div>
<svg style="position:absolute;left:5px;top:42px" width="7" height="10"><path d="M0 0 L5.5 4.5 L0 9.5Z" fill="#000"/></svg>
<div class="t" style="left:-184.507px;width:300px;text-align:right;top:39.95px;font-size:11.7px;line-height:14px;font-weight:bold;color:#000;letter-spacing:0.493px;">2501</div>
<div class="t" style="left:121px;top:39.95px;font-size:11.7px;line-height:14px;font-weight:bold;color:#000;letter-spacing:-0.049px;">ROLO - 60 A 120 M CANUDO 1,65</div>
<div style="left:1px;top:87px;width:349px;height:24px;background:#9fbcf2"></div>
<div style="left:1px;top:87px;width:349px;height:1px;background:#7895d2"></div>
<div style="left:11px;top:87px;width:1px;height:24px;background:#7895d2"></div>
<div style="left:15px;top:90px;width:102px;height:18px;background:#b3cbf2;border:1px solid #7896cf"></div>
<div style="left:331px;top:90px;width:62px;height:18px;background:#b3cbf2;border:1px solid #7896cf"></div>
<div style="left:1px;top:111px;width:349px;height:17px;background:linear-gradient(#fefefe,#f6f5f1 3px,#f6f5f1 12px,#fefefe)"></div>
</div>
<div style="left:668px;top:659px;width:15px;height:15px;background:linear-gradient(135deg,#d6e2fd,#bccdf7);border-radius:2px;box-shadow:inset 0 0 0 1px #e4ecfe, 0 0 0 0.5px #b8c8ec"></div>
<svg style="position:absolute;left:668px;top:659px" width="15" height="15"><path d="M9 4 L5.5 7.5 L9 11" stroke="#4d6185" stroke-width="2" fill="none"/></svg>
<div style="left:685px;top:659px;width:255px;height:15px;background:linear-gradient(#cddcfc,#b8cdf8);border:1px solid #9db4ea;border-radius:2px"></div>
<div style="left:808px;top:663px;width:1px;height:6px;background:#8ea6dd"></div>
<div style="left:810px;top:663px;width:1px;height:6px;background:#8ea6dd"></div>
<div style="left:812px;top:663px;width:1px;height:6px;background:#8ea6dd"></div>
<div style="left:814px;top:663px;width:1px;height:6px;background:#8ea6dd"></div>
<div style="left:1000px;top:659px;width:15px;height:15px;background:linear-gradient(135deg,#d6e2fd,#bccdf7);border-radius:2px;box-shadow:inset 0 0 0 1px #e4ecfe, 0 0 0 0.5px #b8c8ec"></div>
<svg style="position:absolute;left:1000px;top:659px" width="15" height="15"><path d="M6 4 L9.5 7.5 L6 11" stroke="#4d6185" stroke-width="2" fill="none"/></svg>
<div style="left:667px;top:547px;width:349px;height:130px;border:1px solid #183c84"></div>
<div style="left:6px;top:657px;width:448px;height:56px;overflow:hidden;background:#fdfde3">
<div style="left:0px;top:0px;width:448px;height:1px;background:#858276"></div>
<div style="left:0px;top:0px;width:1px;height:56px;background:#858276"></div>
<div style="left:1px;top:1px;width:5px;height:17px;background:#ece9d8;box-shadow:inset 1px 1px #fff, inset -1px -1px #716f64, inset -2px -2px #aca899;"></div>
<div style="left:6px;top:1px;width:80px;height:17px;background:#ece9d8;box-shadow:inset 1px 1px #fff, inset -1px -1px #716f64, inset -2px -2px #aca899;"></div>
<div style="left:86px;top:1px;width:100px;height:17px;background:#ece9d8;box-shadow:inset 1px 1px #fff, inset -1px -1px #716f64, inset -2px -2px #aca899;"></div>
<div style="left:186px;top:1px;width:100px;height:17px;background:#ece9d8;box-shadow:inset 1px 1px #fff, inset -1px -1px #716f64, inset -2px -2px #aca899;"></div>
<div style="left:286px;top:1px;width:168px;height:17px;background:#ece9d8;box-shadow:inset 1px 1px #fff, inset -1px -1px #716f64, inset -2px -2px #aca899;"></div>
<div class="t" style="left:-254.013px;width:600px;text-align:center;top:2.95px;font-size:11.7px;line-height:14px;font-weight:bold;color:#000;letter-spacing:-0.026px;">Nro Peças</div>
<div class="t" style="left:-120.241px;width:300px;text-align:right;top:2.95px;font-size:11.7px;line-height:14px;font-weight:bold;color:#000;letter-spacing:-0.241px;">Peso</div>
<div class="t" style="left:-19.726px;width:300px;text-align:right;top:2.95px;font-size:11.7px;line-height:14px;font-weight:bold;color:#000;letter-spacing:0.274px;">Metros</div>
<div style="left:3px;top:20px;width:3px;height:13px;background:#008000"></div>
<div style="left:7px;top:20px;width:79px;height:13px;background:#008000"></div>
<div style="left:87px;top:20px;width:99px;height:13px;background:#008000"></div>
<div style="left:187px;top:20px;width:99px;height:13px;background:#008000"></div>
<div class="t" style="left:-253.7535px;width:600px;text-align:center;top:19.95px;font-size:11.7px;line-height:14px;font-weight:bold;color:#000;letter-spacing:0.493px;">4</div>
<div class="t" style="left:-119.59px;width:300px;text-align:right;top:19.95px;font-size:11.7px;line-height:14px;font-weight:bold;color:#000;letter-spacing:0.410px;">150,90400</div>
<div class="t" style="left:-19.59px;width:300px;text-align:right;top:19.95px;font-size:11.7px;line-height:14px;font-weight:bold;color:#000;letter-spacing:0.410px;">367,00000</div>
<div style="left:1px;top:34px;width:448px;height:1px;background:#dddcc6"></div>
<div style="left:1px;top:47px;width:448px;height:1px;background:#dddcc6"></div>
<div style="left:6px;top:33px;width:1px;height:22px;background:#dddcc6"></div>
<div style="left:86px;top:33px;width:1px;height:22px;background:#dddcc6"></div>
<div style="left:186px;top:33px;width:1px;height:22px;background:#dddcc6"></div>
<div style="left:286px;top:33px;width:1px;height:22px;background:#dddcc6"></div>
</div>
<div style="left:5px;top:713px;width:449px;height:1px;background:#8f8c80"></div>
<div style="left:5px;top:714px;width:449px;height:1px;background:#b4b1a4"></div>
<div style="left:465px;top:678px;width:554px;height:35px;background:#ece9d8"></div>
<svg style="position:absolute;left:464px;top:684px" width="24" height="24" viewBox="0 0 24 24">
<path d="M16.45 7.25 A7 7 0 1 0 18.08 14.6" stroke="#e00000" stroke-width="2.2" fill="none"/>
<path d="M14.2 11 L19.2 5.8 L19.2 11 Z" fill="#e00000"/>
<path d="M10.2 7 H13 L12.3 14 H10.9 Z" fill="#000"/>
<circle cx="11.6" cy="16.4" r="1.3" fill="#000"/>
</svg>
<div class="t" style="left:487px;top:690.86px;font-size:10.5px;line-height:13px;font-weight:normal;color:#000;">Desalocar</div>
<div style="left:539px;top:680px;width:76px;height:33px;background:#ece9d8;border:1px solid #000;box-shadow:inset -1px -1px #716f64, inset 1px 1px #fff, inset -2px -2px #aca899"></div>
<div style="left:543px;top:684px;width:68px;height:25px;border:1px dotted #000"></div>
<svg style="position:absolute;left:546px;top:684px" width="28" height="26" viewBox="0 0 28 26">
<rect x="6.5" y="11.5" width="2" height="7" fill="#50e8c8" stroke="#000" stroke-width="1"/>
<path d="M8.5 12 H10 L11 10.5 H13.5 L12.5 12 H18.5 V14.2 H14.5 L15 15.8 L14 17 L14.3 18.5 H9.5 L8.5 17.5 Z" fill="#f6f070" stroke="#000" stroke-width="1"/>
<path d="M12 14.3 H15 M11 16.3 H14.5" stroke="#000" stroke-width="0.9"/>
<rect x="19" y="6" width="3" height="2.6" fill="#000"/>
<rect x="19.5" y="9.4" width="2.4" height="2" fill="#000"/>
<rect x="19.5" y="12.3" width="2.4" height="2" fill="#8a1010"/>
<rect x="19.5" y="15.2" width="2.4" height="2" fill="#000"/>
<rect x="19" y="18.1" width="3" height="2.6" fill="#000"/>
</svg>
<div class="t" style="left:572px;top:690.86px;font-size:10.5px;line-height:13px;font-weight:normal;color:#000;">Alocar</div>
<div style="left:642px;top:685px;width:12px;height:12px;background:#fff;box-shadow:inset 1px 1px #808080, inset -1px -1px #fff;"></div>
<svg style="position:absolute;left:642px;top:685px" width="12" height="12" viewBox="0 0 12 12"><path d="M3 5.5 L5 7.5 L9 3.5 L9 5.5 L5 9.5 L3 7.5Z" fill="#000" stroke="#000" stroke-width="0.6"/></svg>
<div style="left:642px;top:699px;width:12px;height:12px;background:#fff;box-shadow:inset 1px 1px #808080, inset -1px -1px #fff;"></div>
<svg style="position:absolute;left:642px;top:699px" width="12" height="12" viewBox="0 0 12 12"><path d="M3 5.5 L5 7.5 L9 3.5 L9 5.5 L5 9.5 L3 7.5Z" fill="#000" stroke="#000" stroke-width="0.6"/></svg>
<div class="t" style="left:660px;top:683.95px;font-size:11.7px;line-height:14px;font-weight:bold;color:#000;letter-spacing:0.045px;">Considerar Depósitos do Atendimento</div>
<div class="t" style="left:660px;top:697.95px;font-size:11.7px;line-height:14px;font-weight:bold;color:#000;letter-spacing:-0.041px;">Valida Acondicionamento</div>
<div style="left:895px;top:681px;width:115px;height:32px;background:#ece9d8;box-shadow:inset -1px -1px #716f64, inset 1px 1px #fff, inset -2px -2px #aca899"></div>
<svg style="position:absolute;left:912px;top:684px" width="28" height="26" viewBox="0 0 28 26">
<path d="M5 8.5 L8 5.8 L15 5 V6.3 L11 8.5 L8.5 11 L6.5 11 Z" fill="#000"/>
<path d="M9.5 9.8 L16.5 16.5" stroke="#000" stroke-width="3.4"/>
<path d="M9.8 9.5 L16.2 15.9" stroke="#e4d878" stroke-width="1.6"/>
<rect x="17" y="6" width="1.6" height="8.5" fill="#000"/>
<path d="M16 14 H20 V19 L19.5 20.5 H16.5 Z" fill="#e01010"/>
<path d="M19.5 19 L21 20.5 L20 21.3 L18.8 20" fill="#000"/>
<path d="M7.5 13.5 L9.5 14.5 L7 16 Q5.5 18 7 19 L9 18 L10 16.5 L13.5 20.5 L12.5 21.3 L9.5 19 Q6 21 5 18.5 Q4.5 15 7.5 13.5 Z" fill="#000"/>
<path d="M6 10.5 Q5 9.5 6.5 9" stroke="#000" stroke-width="1" fill="none"/>
</svg>
<div class="t" style="left:937px;top:690.79px;font-size:10.7px;line-height:13px;font-weight:normal;color:#000;">Configurar</div>
<div style="left:937px;top:703px;width:7px;height:1px;background:#000"></div>
<div style="left:465px;top:712px;width:554px;height:1px;background:#8f8c80"></div>
<div style="left:465px;top:713px;width:554px;height:1px;background:#b4b1a4"></div>
<div style="left:465px;top:714px;width:554px;height:1px;background:#fff"></div>
<div style="left:4px;top:715px;width:1016px;height:2px;background:#ece9d8"></div>
<div style="left:4px;top:717px;width:1016px;height:1px;background:#aca899"></div>
<div style="left:4px;top:718px;width:1016px;height:15px;background:#ece9d8"></div>
<div style="left:4px;top:733px;width:1016px;height:1px;background:#fff"></div>
<div style="left:0px;top:30px;width:4px;height:708px;background:linear-gradient(90deg,#0044c0,#0058ee 2px,#0055e5)"></div>
<div style="left:1020px;top:30px;width:4px;height:708px;background:linear-gradient(90deg,#0055e5,#0050d8 2px,#0032a0)"></div>
<div style="left:0px;top:734px;width:975px;height:4px;background:linear-gradient(#0055e5,#0046c8 2px,#0030a0)"></div>
<div style="left:975px;top:723px;width:60px;height:20px;background:linear-gradient(#a4bcf2,#88a6ea);border-top-left-radius:6px;box-shadow:inset 1px 1px #d0dcf8"></div>
<div class="t" style="left:990px;top:730.69px;font-size:11px;line-height:13px;font-weight:bold;color:#fff;">Atualiza</div>
<svg style="position:absolute;left:0;top:0" width="6" height="6"><path d="M0 0 H5 Q1 1 0 5 Z" fill="#8a96f4"/></svg>
<svg style="position:absolute;left:1018px;top:0" width="6" height="6"><path d="M6 0 H1 Q5 1 6 5 Z" fill="#8a96f4"/></svg>
</div></body></html>
